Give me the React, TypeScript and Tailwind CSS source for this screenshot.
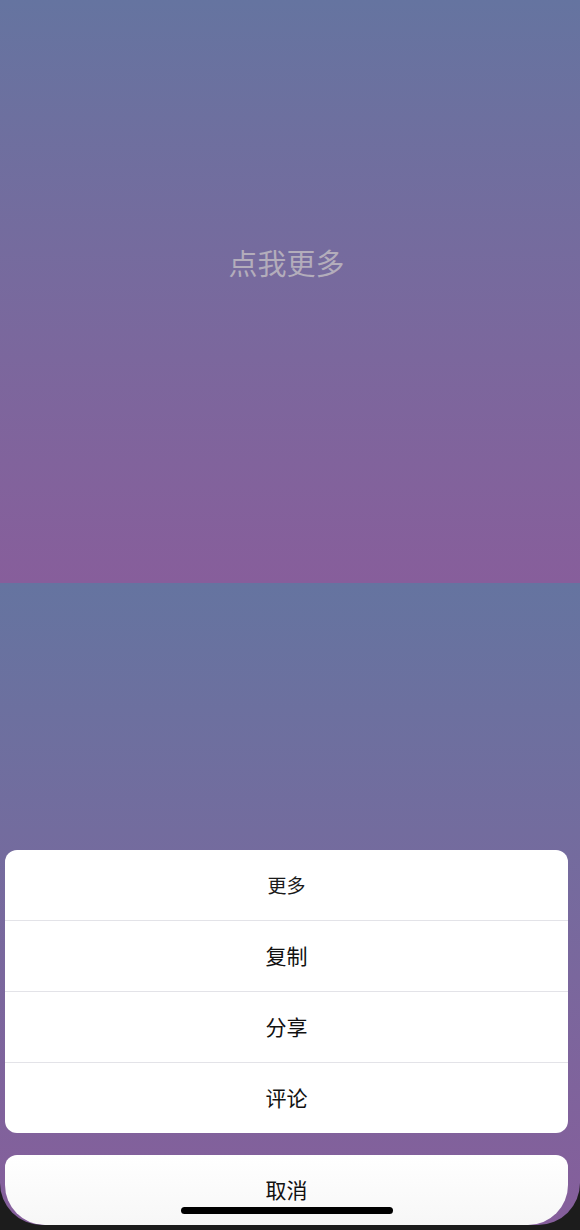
const actions = ["复制", "分享", "评论"];

export default function App() {
  return (
    <div
      className="h-[1230px] w-[580px] bg-[#1c1c1c] overflow-hidden"
      style={{ fontFamily: '"Noto Sans CJK SC", "Noto Sans", sans-serif' }}
    >
      <div className="h-[1225px] flex flex-col rounded-b-[42px] overflow-hidden">
        <div className="h-[583px] shrink-0 bg-gradient-to-b from-[#6574a0] to-[#875e9b] flex justify-center pt-[245px] pr-[7px]">
          <span className="text-[29px] leading-[34px] text-[#b3adbb]">点我更多</span>
        </div>

        <div className="flex-1 flex flex-col justify-end bg-gradient-to-b from-[#6574a0] to-[#855e9b] pl-[5px] pr-[12px]">
          <div className="bg-white rounded-[12px] flex flex-col">
            <div className="h-[70px] flex items-center justify-center text-[19px] text-[#1a1a1a]">更多</div>
            {actions.map((label) => (
              <div
                key={label}
                className="h-[71px] border-t border-[#e3e3e8] flex items-center justify-center text-[21px] text-[#111]"
              >
                {label}
              </div>
            ))}
          </div>

          <div className="mt-[22px] h-[70px] bg-gradient-to-b from-white to-[#f7f7f7] rounded-t-[12px] rounded-b-[40px] flex flex-col items-center pt-[19px]">
            <span className="text-[21px] leading-[30px] text-[#111]">取消</span>
            <div className="mt-[3px] w-[212px] h-[7px] rounded-full bg-black"></div>
          </div>
        </div>
      </div>
    </div>
  );
}
